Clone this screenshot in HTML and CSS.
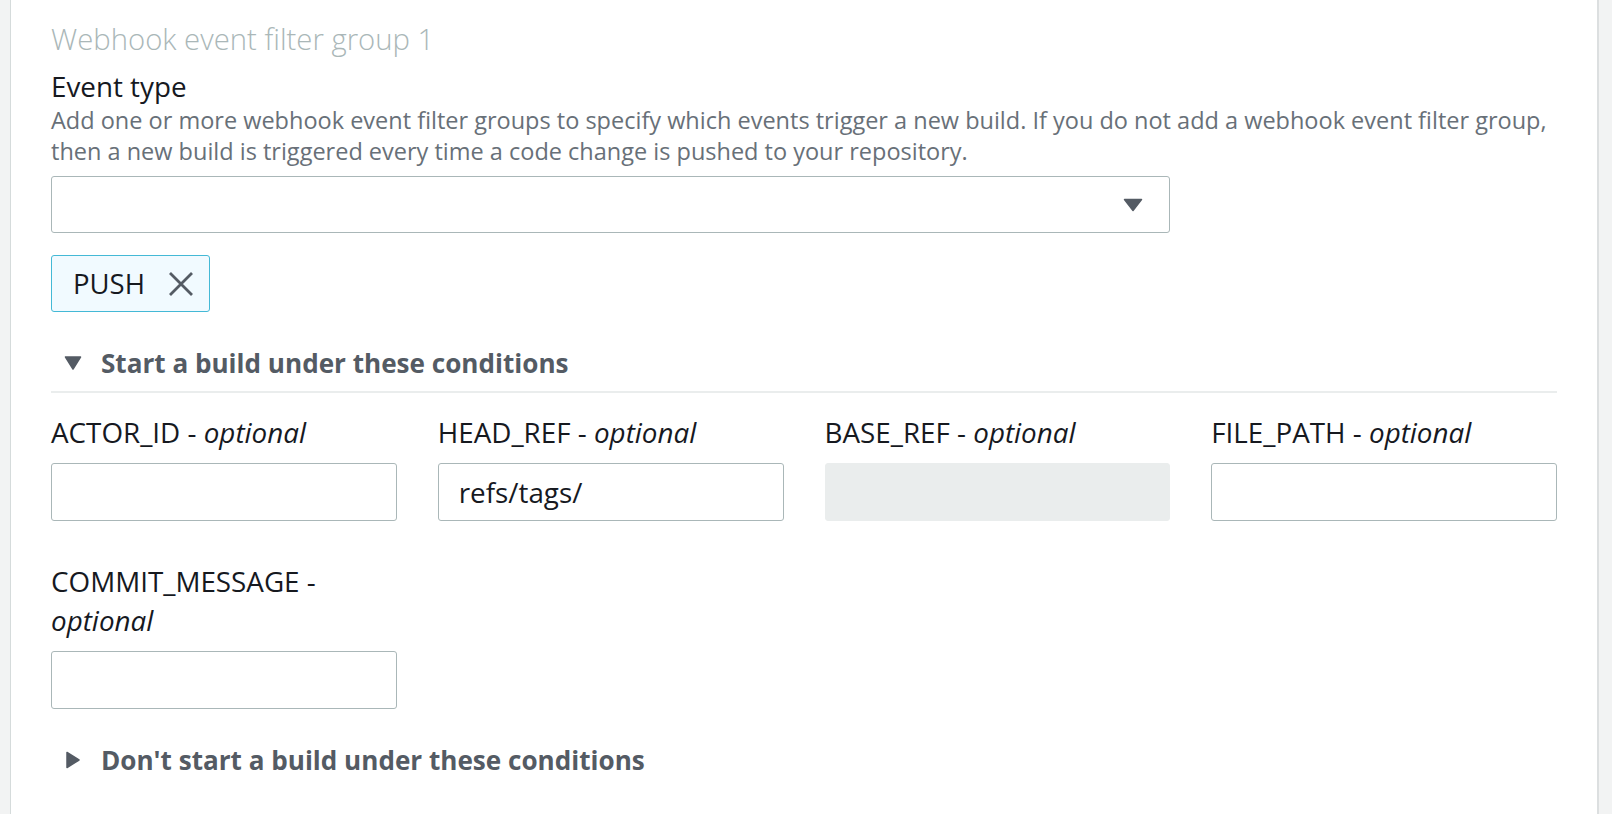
FILE: index.html
```html
<!DOCTYPE html>
<html lang="en">
<head>
<meta charset="utf-8">
<title>Webhook event filter group</title>
<link rel="stylesheet" href="styles.css">
</head>
<body>
<div class="page">
  <div class="rail rail-left"></div>
  <main class="card">
    <h2 class="group-title">Webhook event filter group 1</h2>

    <section class="field">
      <div class="field-label">Event type</div>
      <p class="field-desc">Add one or more webhook event filter groups to specify which events trigger a new build. If you do not add a webhook event filter group, then a new build is triggered every time a code change is pushed to your repository.</p>
      <div class="select">
        <svg class="caret" width="20" height="14" viewBox="0 0 20 14"><path d="M1.5 1.5 H18.5 L10 12.5 Z" fill="#545b64" stroke="#545b64" stroke-width="1.5" stroke-linejoin="round"/></svg>
      </div>
      <div class="tokens">
        <div class="token">
          <span class="token-text">PUSH</span>
          <svg class="token-x" width="26" height="26" viewBox="0 0 26 26"><path d="M2 2 L24 24 M24 2 L2 24" stroke="#545b64" stroke-width="2.8" fill="none"/></svg>
        </div>
      </div>
    </section>

    <section class="expander">
      <div class="expander-head open">
        <svg class="exp-icon" width="18" height="18" viewBox="0 0 18 18"><path d="M1.5 3 H16.5 L9 15 Z" fill="#545b64" stroke="#545b64" stroke-width="1.5" stroke-linejoin="round"/></svg>
        <span class="exp-title">Start a build under these conditions</span>
      </div>
      <div class="cond-grid">
        <div class="cond">
          <label class="cond-label">ACTOR_ID - <i>optional</i></label>
          <div class="input"></div>
        </div>
        <div class="cond">
          <label class="cond-label">HEAD_REF - <i>optional</i></label>
          <div class="input">refs/tags/</div>
        </div>
        <div class="cond">
          <label class="cond-label">BASE_REF - <i>optional</i></label>
          <div class="input disabled"></div>
        </div>
        <div class="cond">
          <label class="cond-label">FILE_PATH - <i>optional</i></label>
          <div class="input"></div>
        </div>
        <div class="cond">
          <label class="cond-label">COMMIT_MESSAGE - <i>optional</i></label>
          <div class="input"></div>
        </div>
      </div>
    </section>

    <section class="expander">
      <div class="expander-head closed">
        <svg class="exp-icon" width="18" height="18" viewBox="0 0 18 18"><path d="M3 1.5 V16.5 L15 9 Z" fill="#545b64" stroke="#545b64" stroke-width="1.5" stroke-linejoin="round"/></svg>
        <span class="exp-title">Don't start a build under these conditions</span>
      </div>
    </section>
  </main>
  <div class="rail rail-right"></div>
</div>
</body>
</html>
```

FILE: styles.css
```css
html, body {
  margin: 0;
  padding: 0;
  background: #ffffff;
}

body {
  font-family: "Open Sans", "Liberation Sans", Arial, sans-serif;
  color: #16191f;
}

.page {
  display: flex;
  height: 814px;
  overflow: hidden;
}

.rail {
  background: #f2f3f3;
}

.rail-left {
  width: 10px;
  border-right: 1px solid #d5dbdb;
}

.rail-right {
  width: 13px;
  border-left: 2px solid #dcdfe0;
}

.card {
  flex: 1;
  padding: 21px 40px 0 40px;
  min-width: 0;
}

.group-title {
  margin: 0;
  font-size: 29.3px;
  font-weight: 300;
  line-height: 36px;
  color: #aab7b8;
}

.field {
  margin-top: 12px;
}

.field-label {
  font-size: 27.8px;
  line-height: 34px;
  color: #16191f;
}

.field-desc {
  margin: 2px 0 0;
  font-size: 23.5px;
  line-height: 31px;
  color: #687078;
}

.select {
  margin-top: 9px;
  width: 1119px;
  height: 57px;
  border: 1px solid #aab7b8;
  border-radius: 3px;
  display: flex;
  align-items: center;
  justify-content: flex-end;
  padding-right: 26px;
  box-sizing: border-box;
}

.tokens {
  margin-top: 22px;
  display: flex;
}

.token {
  display: flex;
  align-items: center;
  gap: 23px;
  height: 57px;
  box-sizing: border-box;
  padding: 0 15px 0 21px;
  border: 1px solid #44b9d6;
  border-radius: 3px;
  background: #f1faff;
}

.token-text {
  font-size: 27.5px;
  color: #16191f;
}

.expander {
  margin-top: 27px;
}

.expander-head {
  display: flex;
  align-items: center;
  gap: 19px;
  padding-left: 13px;
  height: 48px;
}

.exp-title {
  font-size: 26.1px;
  font-weight: 700;
  color: #545b64;
}

.expander-head.open {
  border-bottom: 2px solid #eaeded;
  padding-bottom: 4px;
}

.cond-grid {
  display: grid;
  grid-template-columns: repeat(4, 1fr);
  column-gap: 41px;
  row-gap: 41px;
  margin-top: 20px;
}

.cond {
  display: flex;
  flex-direction: column;
}

.cond-label {
  font-size: 27.8px;
  line-height: 39px;
  color: #16191f;
}

.input {
  margin-top: 11px;
  height: 58px;
  box-sizing: border-box;
  border: 1px solid #aab7b8;
  border-radius: 3px;
  display: flex;
  align-items: center;
  padding-left: 20px;
  font-size: 27.8px;
  color: #16191f;
}

.input.disabled {
  background: #eaeded;
  border-color: #eaeded;
}
```
